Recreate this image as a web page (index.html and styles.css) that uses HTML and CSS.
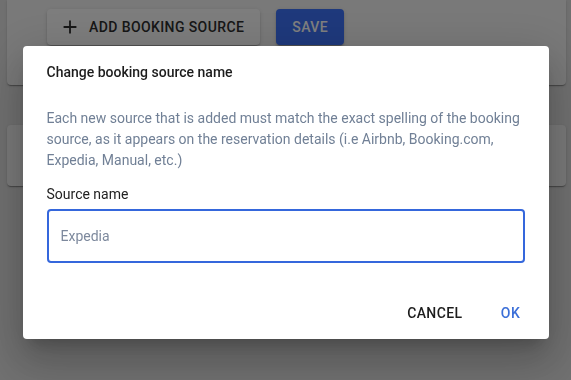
FILE: index.html
```html
<!DOCTYPE html>
<html lang="en">
<head>
<meta charset="utf-8">
<title>Booking sources</title>
<link rel="stylesheet" href="styles.css">
</head>
<body>
<div class="page">
  <div class="card card-top">
    <div class="toolbar">
      <button class="btn btn-add" type="button">
        <svg class="btn-icon" viewBox="0 0 24 24" width="22" height="22" aria-hidden="true"><path d="M19 13h-6v6h-2v-6H5v-2h6V5h2v6h6v2z"/></svg>
        <span>Add booking source</span>
      </button>
      <button class="btn btn-save" type="button">Save</button>
    </div>
  </div>
  <div class="card card-second"></div>
</div>

<div class="overlay">
  <div class="dialog" role="dialog" aria-labelledby="dlg-title">
    <h2 class="dialog-title" id="dlg-title">Change booking source name</h2>
    <div class="dialog-body">
      <p class="desc">Each new source that is added must match the exact spelling of the booking source, as it appears on the reservation details (i.e Airbnb, Booking.com, Expedia, Manual, etc.)</p>
      <label class="label" for="src">Source name</label>
      <input class="field" id="src" type="text" placeholder="Expedia">
    </div>
    <div class="actions">
      <button class="text-btn text-btn-cancel" type="button">Cancel</button>
      <button class="text-btn text-btn-ok" type="button">OK</button>
    </div>
  </div>
</div>
</body>
</html>
```
FILE: styles.css
```css
* { box-sizing: border-box; }

html, body {
  margin: 0;
  padding: 0;
  height: 100%;
}

body {
  font-family: Roboto, "Noto Sans", "Liberation Sans", sans-serif;
  background: #e0e0e0;
  overflow: hidden;
}

.page {
  padding: 0 5px 0 7px;
}

.card {
  background: #f3f3f3;
  border-radius: 4px;
  box-shadow: 0 2px 1px -1px rgba(0,0,0,.2), 0 1px 1px rgba(0,0,0,.14), 0 1px 3px rgba(0,0,0,.12);
}

.card-top {
  height: 85px;
  border-top-left-radius: 0;
  border-top-right-radius: 0;
  padding: 9px 40px 0;
}

.card-second {
  height: 61px;
  margin-top: 40px;
}

.toolbar {
  display: flex;
  gap: 16px;
}

.btn {
  display: inline-flex;
  align-items: center;
  height: 36px;
  padding: 0 16px;
  border: 0;
  border-radius: 4px;
  font-family: inherit;
  font-size: 14px;
  font-weight: 500;
  letter-spacing: 0.4px;
  text-transform: uppercase;
  box-shadow: 0 3px 1px -2px rgba(0,0,0,.2), 0 2px 2px rgba(0,0,0,.14), 0 1px 5px rgba(0,0,0,.12);
}

.btn-add {
  background: #fbfbfb;
  color: #2e2e2e;
}

.btn-icon {
  fill: currentColor;
  margin-left: -4px;
  margin-right: 8px;
}

.btn-save {
  background: #3d72f8;
  color: #fff;
}

.overlay {
  position: fixed;
  inset: 0;
  background: rgba(0,0,0,.5);
  display: flex;
  justify-content: center;
  align-items: flex-start;
}

.dialog {
  width: 526px;
  margin-top: 46px;
  background: #fff;
  border-radius: 4px;
  box-shadow: 0 11px 15px -7px rgba(0,0,0,.2), 0 24px 38px 3px rgba(0,0,0,.14), 0 9px 46px 8px rgba(0,0,0,.12);
}

.dialog-title {
  margin: 0;
  padding: 16px 24px 0;
  font-size: 14px;
  line-height: 20px;
  font-weight: 500;
  color: #1c1c1c;
}

.dialog-body {
  padding: 26px 24px 0;
  display: flex;
  flex-direction: column;
}

.desc {
  margin: 0;
  font-size: 14px;
  line-height: 21px;
  color: #718096;
}

.label {
  margin-top: 13px;
  font-size: 14px;
  line-height: 20px;
  color: #222;
}

.field {
  margin-top: 5px;
  height: 54px;
  width: 100%;
  padding: 0 12px;
  border: 2px solid #3567dc;
  border-radius: 4px;
  font-family: inherit;
  font-size: 14px;
  color: #222;
  outline: none;
  background: #fff;
}

.field::placeholder {
  color: #7d899d;
}

.actions {
  display: flex;
  justify-content: flex-end;
  gap: 8px;
  margin-top: 24px;
  padding: 8px 6px 8px 8px;
}

.text-btn {
  min-width: 64px;
  height: 36px;
  padding: 0 8px;
  border: 0;
  background: transparent;
  border-radius: 4px;
  font-family: inherit;
  font-size: 14px;
  font-weight: 500;
  letter-spacing: 0.4px;
  text-transform: uppercase;
}

.text-btn-cancel { color: #1c1c1c; }
.text-btn-ok { color: #3b6fd8; }
```
